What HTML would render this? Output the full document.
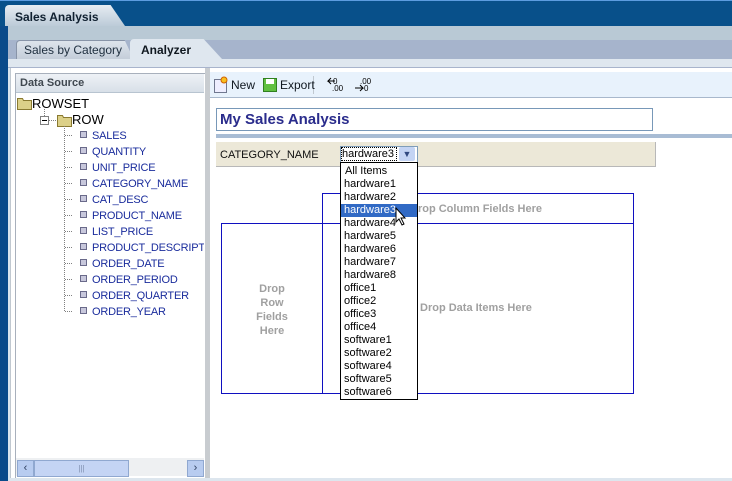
<!DOCTYPE html>
<html><head><style>
body{margin:0;width:732px;height:481px;overflow:hidden;background:#dbe5ee;font-family:"Liberation Sans",Arial,sans-serif;position:relative}
.a{position:absolute}
.t{font-size:11px;color:#1a2c9c}
</style></head><body>
<div class="a" style="left:0;top:0;width:732px;height:26px;background:#08508a;border-top:1px solid #5c9ce0"></div>
<div class="a" style="left:5px;top:5px;height:21px;background:linear-gradient(#e6ecf2,#bccbd8);border-radius:4px 0 0 0;clip-path:polygon(0 0,88% 0,100% 100%,0 100%);width:120px"></div>
<div class="a" style="left:15px;top:10px;font-size:12px;font-weight:bold;color:#102030">Sales Analysis</div>
<div class="a" style="left:0;top:26px;width:8px;height:455px;background:#0a4a8a"></div>
<div class="a" style="left:8px;top:26px;width:724px;height:14px;background:#b9c9d5"></div>
<div class="a" style="left:8px;top:40px;width:724px;height:19px;background:#a6b4cc"></div>
<div class="a" style="left:16px;top:40px;width:116px;height:19px;background:linear-gradient(#dde4ec,#c3ccd8);border:1px solid #8894a8;border-bottom:none;border-radius:4px 0 0 0;clip-path:polygon(0 0,92% 0,100% 100%,0 100%)"></div>
<div class="a" style="left:24px;top:43px;font-size:12px;color:#203040">Sales by Category</div>
<div class="a" style="left:130px;top:39px;width:92px;height:20px;background:#dfe7ef;border-radius:4px 0 0 0;clip-path:polygon(0 0,80% 0,100% 100%,0 100%)"></div>
<div class="a" style="left:141px;top:43px;font-size:12px;font-weight:bold;color:#101820">Analyzer</div>
<div class="a" style="left:8px;top:59px;width:724px;height:8px;background:#dfe7ef;border-bottom:1px solid #a8b4cc"></div>
<div class="a" style="left:10px;top:68px;width:722px;height:413px;background:#fff;border-left:1px solid #c0c8d0"></div>
<!-- left panel -->
<div class="a" style="left:15px;top:73px;width:189px;height:404px;background:#fff;border:1px solid #a8b0bc"></div>
<div class="a" style="left:16px;top:74px;width:188px;height:18px;background:linear-gradient(#eef2f6,#d8e0e8);border-bottom:1px solid #b8c4d0"></div>
<div class="a" style="left:20px;top:77px;font-size:11px;font-weight:bold;color:#404850">Data Source</div>
<div class="a" style="left:205px;top:68px;width:5px;height:413px;background:#c8ccd0"></div>
<svg class="a" style="left:16px;top:95px" width="190" height="225">
<g fill="#dcd088" stroke="#8a7a30" stroke-width="1"><path d="M1.5 3.5h5l1 2h8v9h-14z"/><path d="M41.5 20.5h5l1 2h8v9h-14z"/></g>
<rect x="24.5" y="21.5" width="8" height="8" fill="#fff" stroke="#808080"/><path d="M26 25.5h5" stroke="#000"/>
<g stroke="#808080" stroke-dasharray="1 1"><path d="M28.5 14v7M33 25.5h7M48.5 31v185"/>
<path d="M49 40.5h8M49 56.5h8M49 72.5h8M49 88.5h8M49 104.5h8M49 120.5h8M49 136.5h8M49 152.5h8M49 168.5h8M49 184.5h8M49 200.5h8M49 216.5h8"/></g>
<g fill="#c8c8dc" stroke="#6a6a8a"><rect x="64.5" y="36.5" width="6" height="6"/><rect x="64.5" y="52.5" width="6" height="6"/><rect x="64.5" y="68.5" width="6" height="6"/><rect x="64.5" y="84.5" width="6" height="6"/><rect x="64.5" y="100.5" width="6" height="6"/><rect x="64.5" y="116.5" width="6" height="6"/><rect x="64.5" y="132.5" width="6" height="6"/><rect x="64.5" y="148.5" width="6" height="6"/><rect x="64.5" y="164.5" width="6" height="6"/><rect x="64.5" y="180.5" width="6" height="6"/><rect x="64.5" y="196.5" width="6" height="6"/><rect x="64.5" y="212.5" width="6" height="6"/></g>
</svg>
<div class="a" style="left:32px;top:96px;font-size:13px;color:#000">ROWSET</div>
<div class="a" style="left:72px;top:112px;font-size:13px;color:#000">ROW</div>
<div class="a t" style="left:92px;top:128px;line-height:16px;width:112px;overflow:hidden;white-space:nowrap;letter-spacing:-0.2px">SALES<br>QUANTITY<br>UNIT_PRICE<br>CATEGORY_NAME<br>CAT_DESC<br>PRODUCT_NAME<br>LIST_PRICE<br>PRODUCT_DESCRIPTION<br>ORDER_DATE<br>ORDER_PERIOD<br>ORDER_QUARTER<br>ORDER_YEAR</div>
<!-- scrollbar -->
<div class="a" style="left:16px;top:458px;width:188px;height:18px;background:#eef0f2"></div>
<div class="a" style="left:17px;top:460px;width:15px;height:15px;background:#b8ccf0;border:1px solid #90a8d0;font-size:11px;line-height:15px;text-align:center;color:#304060">‹</div>
<div class="a" style="left:34px;top:460px;width:93px;height:15px;background:#c4d4f4;border:1px solid #90a8d0;font-size:8px;line-height:15px;text-align:center;color:#8090b0">|||</div>
<div class="a" style="left:187px;top:460px;width:15px;height:15px;background:#b8ccf0;border:1px solid #90a8d0;font-size:11px;line-height:15px;text-align:center;color:#304060">›</div>
<!-- right -->
<div class="a" style="left:210px;top:72px;width:522px;height:25px;background:#e8f2fc;border-bottom:1px solid #a8b8cc"></div>
<svg class="a" style="left:213px;top:76px" width="160" height="18">
<path d="M1.5 3.5h9l3 3v10h-12z" fill="#eef" stroke="#707890"/><circle cx="11" cy="4" r="3" fill="#f8c020" stroke="#d06000"/>
<rect x="50.5" y="2.5" width="13" height="13" fill="#60c040" stroke="#308020"/><rect x="53" y="3" width="8" height="5" fill="#fff"/>
<path d="M100.5 0v18" stroke="#c0c8d0"/>
<text x="120" y="8" font-size="8" font-family="Liberation Sans">0</text><text x="119" y="15" font-size="8" font-family="Liberation Sans">.00</text><path d="M122 5h-7l3-3M115 5l3 3" stroke="#000" fill="none"/>
<text x="147" y="8" font-size="8" font-family="Liberation Sans">.00</text><text x="151" y="15" font-size="8" font-family="Liberation Sans">0</text><path d="M142 12h8l-3-3M150 12l-3 3" stroke="#000" fill="none"/>
</svg>
<div class="a" style="left:231px;top:78px;font-size:12px;color:#101820">New</div>
<div class="a" style="left:280px;top:78px;font-size:12px;color:#101820">Export</div>
<div class="a" style="left:216px;top:108px;width:435px;height:21px;border:1px solid #7898b8;background:#fff"></div>
<div class="a" style="left:220px;top:111px;font-size:15px;font-weight:bold;color:#2a2c8c">My Sales Analysis</div>
<div class="a" style="left:216px;top:134px;width:516px;height:4px;background:#a8bcd4"></div>
<div class="a" style="left:216px;top:142px;width:439px;height:24px;background:#ece8d8;border-right:1px solid #b8b8b8;border-bottom:1px solid #b8b8b8"></div>
<div class="a" style="left:220px;top:149px;font-size:11px;color:#101010">CATEGORY_NAME</div>
<div class="a" style="left:340px;top:146px;width:76px;height:15px;border:1px solid #7f9db9;background:#fff"></div>
<div class="a" style="left:342px;top:148px;width:54px;height:12px;outline:1px dotted #000;font-size:11px;line-height:12px;color:#000">hardware3</div>
<div class="a" style="left:399px;top:147px;width:16px;height:14px;background:#c4d4f4;border-radius:2px;text-align:center;font-size:9px;line-height:14px;color:#304880">▼</div>
<div class="a" style="left:322px;top:193px;width:310px;height:199px;border:1px solid #1010c0"></div>
<div class="a" style="left:221px;top:223px;width:411px;height:169px;border:1px solid #1010c0;border-right:none"></div>
<div class="a" style="left:322px;top:223px;width:1px;height:170px;background:#1010c0"></div>
<div class="a" style="left:410px;top:203px;font-size:11px;font-weight:bold;color:#a0a0a0">Drop Column Fields Here</div>
<div class="a" style="left:420px;top:302px;font-size:11px;font-weight:bold;color:#a0a0a0">Drop Data Items Here</div>
<div class="a" style="left:240px;top:282px;width:64px;text-align:center;font-size:11px;line-height:14px;font-weight:bold;color:#a0a0a0">Drop<br>Row<br>Fields<br>Here</div>
<div class="a" style="left:340px;top:162px;width:76px;height:234px;background:#fff;border:1px solid #000;font-size:11px;line-height:13px;color:#000;padding-top:2px;box-sizing:content-box">
<div style="padding-left:4px">All Items</div><div style="padding-left:3px">hardware1</div><div style="padding-left:3px">hardware2</div><div style="padding-left:3px;background:#316ac5;color:#fff">hardware3</div><div style="padding-left:3px">hardware4</div><div style="padding-left:3px">hardware5</div><div style="padding-left:3px">hardware6</div><div style="padding-left:3px">hardware7</div><div style="padding-left:3px">hardware8</div><div style="padding-left:3px">office1</div><div style="padding-left:3px">office2</div><div style="padding-left:3px">office3</div><div style="padding-left:3px">office4</div><div style="padding-left:3px">software1</div><div style="padding-left:3px">software2</div><div style="padding-left:3px">software4</div><div style="padding-left:3px">software5</div><div style="padding-left:3px">software6</div></div>
<svg class="a" style="left:395px;top:207px" width="14" height="20"><path d="M1 1v14l3-3 3 6 2-1-3-6h4z" fill="#fff" stroke="#000"/></svg>
<div class="a" style="left:10px;top:478px;width:722px;height:3px;background:#dde6ee"></div>
</body></html>
